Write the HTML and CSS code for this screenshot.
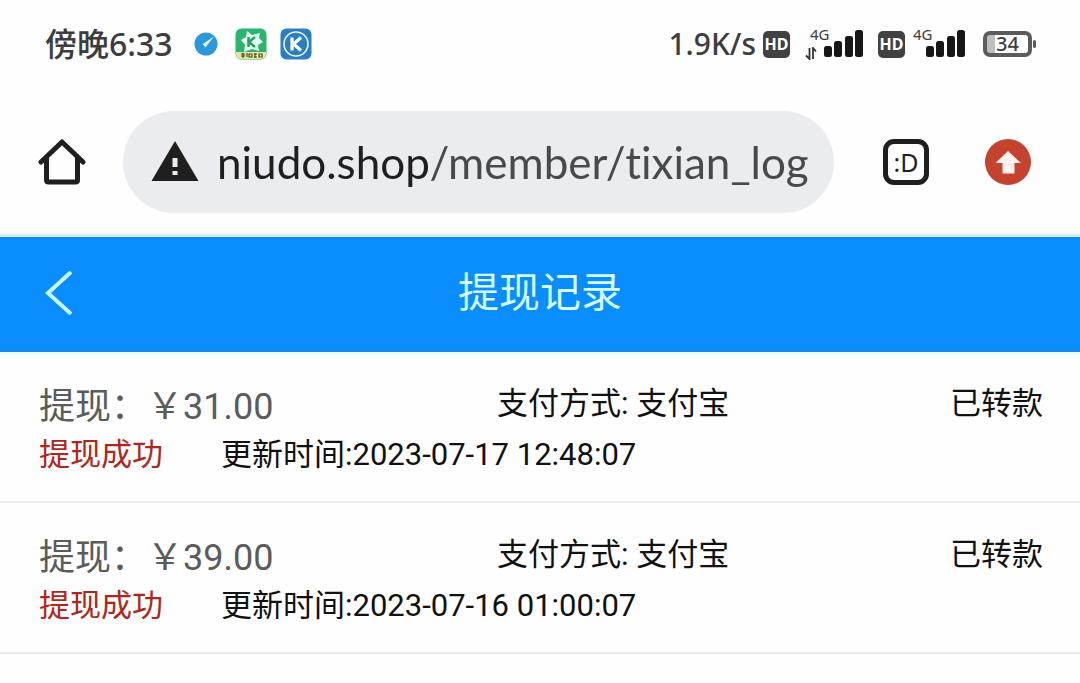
FILE: index.html
```
<!DOCTYPE html>
<html lang="zh-CN">
<head>
<meta charset="utf-8">
<meta name="viewport" content="width=device-width, initial-scale=1">
<title>提现记录</title>
<link rel="stylesheet" href="styles.css">
</head>
<body>
<div class="status-bar">
  <div class="status-left">
    <span class="clock">傍晚6:33</span>
    <svg class="app-dot" width="24" height="24" viewBox="0 0 24 24" aria-hidden="true"><circle cx="12" cy="12" r="11.5" fill="#2b98dc"/><path d="M20 4.500 8.500 12.300l3 3z" fill="#e4faff"/></svg>
    <svg class="app-green" width="32" height="32" viewBox="0 0 32 32" aria-hidden="true"><rect x="0.5" y="0.5" width="31" height="31" rx="6" fill="#29b56b"/><path d="M1 24h30v2a5 5 0 0 1-5 5H6a5 5 0 0 1-5-5z" fill="#e6e7a2"/><path d="m12 3 5 4 8-2-1 5 4 4-5 3 1 6-7-2-8 3 1-7-4-5 5-3z" fill="#e5fff1"/><path d="M13.5 9v10M20 9l-6 5 6 5" fill="none" stroke="#299e62" stroke-width="2.5"/><path d="M6 26h4M8 25v5M6 28h4M12 25v4M14 26h3v3h-3zM19 26h3M19 29h3M20 25v5M24 26h3v3h-3z" fill="none" stroke="#4b4b27" stroke-width="1.2"/></svg>
    <svg width="32" height="32" viewBox="0 0 32 32" aria-hidden="true"><rect x="0.5" y="0.5" width="31" height="31" rx="6" fill="#2b7ec3"/><circle cx="16" cy="16" r="12" fill="none" stroke="#e9faff" stroke-width="1.6"/><path d="M12 9.5v13M21 9.5 13.5 16l7.5 6.5" fill="none" stroke="#fff" stroke-width="3.2"/></svg>
  </div>
  <div class="status-right">
    <span class="speed">1.9K/s</span>
    <span class="hd">HD</span>
    <div class="signal signal-data">
      <div class="network"><span>4G</span><svg width="12" height="13" viewBox="0 0 12 13" aria-hidden="true"><path d="M4.500 1v11L1 8.500M8 12V1l3 3.500" fill="none" stroke="#333" stroke-width="1.8"/></svg></div>
      <svg width="40" height="28" viewBox="0 0 40 28" aria-hidden="true"><g fill="#171717"><rect x="0" y="16" width="8" height="11" rx="2.500"/><rect x="10" y="11" width="8" height="16" rx="2.500"/><rect x="21" y="6" width="8" height="21" rx="2.500"/><rect x="31" y="0" width="8" height="27" rx="2.500"/></g></svg>
    </div>
    <span class="hd hd-second">HD</span>
    <div class="signal">
      <div class="network"><span>4G</span></div>
      <svg width="40" height="28" viewBox="0 0 40 28" aria-hidden="true"><g fill="#171717"><rect x="0" y="16" width="8" height="11" rx="2.500"/><rect x="10" y="11" width="8" height="16" rx="2.500"/><rect x="21" y="6" width="8" height="21" rx="2.500"/><rect x="31" y="0" width="8" height="27" rx="2.500"/></g></svg>
    </div>
    <div class="battery"><span class="battery-level">34</span></div>
  </div>
</div>
<div class="toolbar">
  <button class="icon-button" type="button" aria-label="主页"><svg width="48" height="48" viewBox="0 0 48 48"><path d="M3 24 24 4l21 20M8.500 20v22q0 2 2 2h27q2 0 2-2V20" fill="none" stroke="#1f1f1f" stroke-width="5" stroke-linecap="round" stroke-linejoin="round"/></svg></button>
  <label class="address">
    <svg width="48" height="42" viewBox="0 0 48 42" aria-hidden="true"><path d="M24 0 47.500 40H.5z" fill="#1f1f1f"/><path d="M21.500 17h5v9h-5zM21.500 30h5v4h-5z" fill="#ebecf0"/></svg>
    <input class="url" type="text" aria-label="网址" value="niudo.shop/member/tixian_log" spellcheck="false">
  </label>
  <button class="tabs" type="button" aria-label="标签页">:D</button>
  <button class="icon-button" type="button" aria-label="更新"><svg width="46" height="46" viewBox="0 0 46 46"><circle cx="23" cy="23" r="23" fill="#c5432e"/><path d="M23 12 36 24h-6.500v10.500h-12V24H10.500z" fill="#fff1ef"/></svg></button>
</div>
<header class="page-header">
  <a class="back" href="#" aria-label="返回"><svg width="28" height="44" viewBox="0 0 28 44"><path d="M26 1 3 22l23 21" fill="none" stroke="#c5fbff" stroke-width="4"/></svg></a>
  <h1 class="title">提现记录</h1>
</header>
<main>
  <article class="record">
    <div class="record-main">
      <span class="amount">提现：￥31.00</span>
      <span class="method">支付方式: 支付宝</span>
      <span class="state">已转款</span>
    </div>
    <div class="record-meta"><span class="result">提现成功</span><time datetime="2023-07-17T12:48:07">更新时间:2023-07-17 12:48:07</time></div>
  </article>
  <article class="record">
    <div class="record-main">
      <span class="amount">提现：￥39.00</span>
      <span class="method">支付方式: 支付宝</span>
      <span class="state">已转款</span>
    </div>
    <div class="record-meta"><span class="result">提现成功</span><time datetime="2023-07-16T01:00:07">更新时间:2023-07-16 01:00:07</time></div>
  </article>
</main>
</body>
</html>
```
FILE: styles.css
```
* { box-sizing: border-box; }
body {
  margin: 0;
  background: #fefefe;
  color: #111;
  font-family: Roboto, "Noto Sans CJK SC", sans-serif;
}
button { padding: 0; border: 0; background: none; cursor: pointer; }
svg { display: block; flex: none; }

.status-bar {
  display: flex;
  justify-content: space-between;
  padding: 20px 48px 0 45px;
  height: 88px;
  color: #3d3d3d;
  font-family: "Noto Sans", "Noto Sans CJK SC", sans-serif;
}
.status-left, .status-right { display: flex; align-items: center; height: 48px; }
.clock { margin-right: 21px; font-size: 32px; font-weight: 500; line-height: 48px; }
.app-dot { margin-right: 17px; }
.app-green { margin-right: 13px; }
.speed { margin-right: 7px; font-size: 30px; font-weight: 500; line-height: 48px; }
.hd {
  width: 27px;
  border-radius: 5px;
  background: #414141;
  color: #fff;
  font-size: 16px;
  font-weight: 700;
  line-height: 27px;
  text-align: center;
}
.hd-second { margin-left: 14px; }
.signal { display: flex; align-items: center; margin-left: 8px; }
.signal-data { margin-left: 15px; }
.network {
  display: flex;
  flex-direction: column;
  height: 36px;
  width: 12px;
  margin-right: 1px;
  font-size: 15px;
  line-height: 16px;
}
.signal-data .network { gap: 5px; width: 18px; }
.signal-data span { margin-left: 5px; }
.battery {
  position: relative;
  width: 49px;
  height: 26px;
  margin-left: 17px;
  border: 4px solid #5b5b5b;
  border-radius: 7px;
  background: linear-gradient(90deg, #bebebe 20%, #fff 20%);
  font-size: 20px;
  font-weight: 500;
  line-height: 18px;
  text-align: center;
}
.battery::after {
  content: "";
  position: absolute;
  top: 5px;
  right: -8px;
  width: 3px;
  height: 8px;
  border-radius: 2px;
  background: #5b5b5b;
}

.toolbar { display: flex; align-items: center; padding: 23px 49px 24px 38px; }
.address {
  display: flex;
  flex: 1;
  align-items: center;
  gap: 18px;
  min-width: 0;
  height: 102px;
  margin: 0 49px 0 37px;
  padding: 0 20px 0 28px;
  border-radius: 51px;
  background: #ebecf0;
}
.url {
  flex: 1;
  min-width: 0;
  padding: 0;
  border: 0;
  outline: 0;
  background: linear-gradient(90deg, #1f1f1f 213px, #48494b 213px);
  background-clip: text;
  -webkit-background-clip: text;
  color: transparent;
  font-family: Lato, sans-serif;
  font-size: 44px;
  font-variant-ligatures: none;
  line-height: 60px;
}
.tabs {
  width: 46px;
  height: 46px;
  margin-right: 56px;
  border: 5px solid #1f1f1f;
  border-radius: 11px;
  color: #1f1f1f;
  font-family: "Noto Sans", sans-serif;
  font-size: 25px;
  line-height: 34px;
}

.page-header {
  display: grid;
  grid-template-columns: 1fr auto 1fr;
  align-items: center;
  height: 115px;
  padding: 0 45px 4px;
  border-top: 1px solid #2b83cb;
  border-bottom: 1px solid #2b83cb;
  background: #098dff;
  box-shadow: 0 -3px #c8f0fa, 0 3px #e8ffff;
}
.back { justify-self: start; }
.title { margin: 0; color: #d5fcff; font-size: 41px; font-weight: 400; line-height: 60px; }

.record { padding: 31px 37px 22px 39px; border-bottom: 2px solid #ececec; }
.record-main, .record-meta { height: 48px; font-size: 31px; }
.record-main { display: grid; grid-template-columns: 458px 1fr auto; line-height: 42px; }
.amount { color: #5b5b5b; font-size: 36px; line-height: 48px; }
.record-meta { display: flex; gap: 58px; line-height: 48px; }
.result { color: #b0261d; }
```
